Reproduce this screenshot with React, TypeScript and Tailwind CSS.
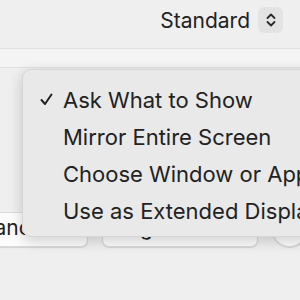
export default function App() {
  const items = [
    { label: "Ask What to Show", checked: true },
    { label: "Mirror Entire Screen", checked: false },
    { label: "Choose Window or App", checked: false },
    { label: "Use as Extended Display", checked: false },
  ];

  return (
    <div
      className="relative w-[300px] h-[300px] overflow-hidden bg-[#efefef] text-[#222]"
      style={{ fontFamily: "Inter, 'Liberation Sans', sans-serif" }}
    >
      {/* Header row */}
      <div className="h-[48px] flex items-center justify-end gap-[8px] pr-[17px] pb-[8px]">
        <span className="text-[21px] leading-none">Standard</span>
        <div className="w-[25px] h-[26px] rounded-[6px] bg-[#e3e3e3] flex items-center justify-center">
          <svg width="12" height="16" viewBox="0 0 12 16" fill="none" stroke="#2a2a2a" strokeWidth="1.8" strokeLinecap="round" strokeLinejoin="round">
            <path d="M2.5 6 L6 2.5 L9.5 6" />
            <path d="M2.5 10 L6 13.5 L9.5 10" />
          </svg>
        </div>
      </div>

      {/* Divider band */}
      <div className="h-[20px] border-y border-[#e0e0e0] bg-[#f4f4f4]" />

      {/* Content area */}
      <div className="h-[144px]" />

      {/* Bottom buttons */}
      <div className="flex items-center gap-[14px] ml-[-90px]">
        <div className="w-[178px] h-[35px] shrink-0 rounded-[7px] bg-[#fcfcfc] border border-[#dadada] shadow-[0_1px_1px_rgba(0,0,0,0.12)] flex items-center justify-end pr-[13px] pb-[3px] text-[21px]">
          Advanced…
        </div>
        <div className="w-[156px] h-[35px] shrink-0 rounded-[7px] bg-[#fcfcfc] border border-[#dadada] shadow-[0_1px_1px_rgba(0,0,0,0.12)] flex items-center justify-center pb-[3px] text-[21px]">
          Night Shift…
        </div>
        <div className="w-[35px] h-[35px] shrink-0 rounded-full bg-[#fcfcfc] border border-[#dadada] shadow-[0_1px_1px_rgba(0,0,0,0.12)] flex items-center justify-center pb-[3px] text-[21px]">
          ?
        </div>
      </div>

      {/* Popup menu */}
      <div className="absolute left-[22px] top-[69px] w-[300px] h-[168px] rounded-[9px] bg-[#e9e9e9] border border-[#d6d6d6] shadow-[0_4px_14px_rgba(0,0,0,0.18)] pt-[11px] pb-[8px]">
        {items.map((it) => (
          <div key={it.label} className="h-[37px] flex items-center">
            <div className="w-[40px] flex justify-end pr-[10px]">
              {it.checked && (
                <svg width="13" height="13" viewBox="0 0 13 13" fill="none" stroke="#222" strokeWidth="2" strokeLinecap="round" strokeLinejoin="round">
                  <path d="M1.5 7 L5 11 L11.5 1.5" />
                </svg>
              )}
            </div>
            <span className="text-[22px] leading-none whitespace-nowrap">{it.label}</span>
          </div>
        ))}
      </div>
    </div>
  );
}
